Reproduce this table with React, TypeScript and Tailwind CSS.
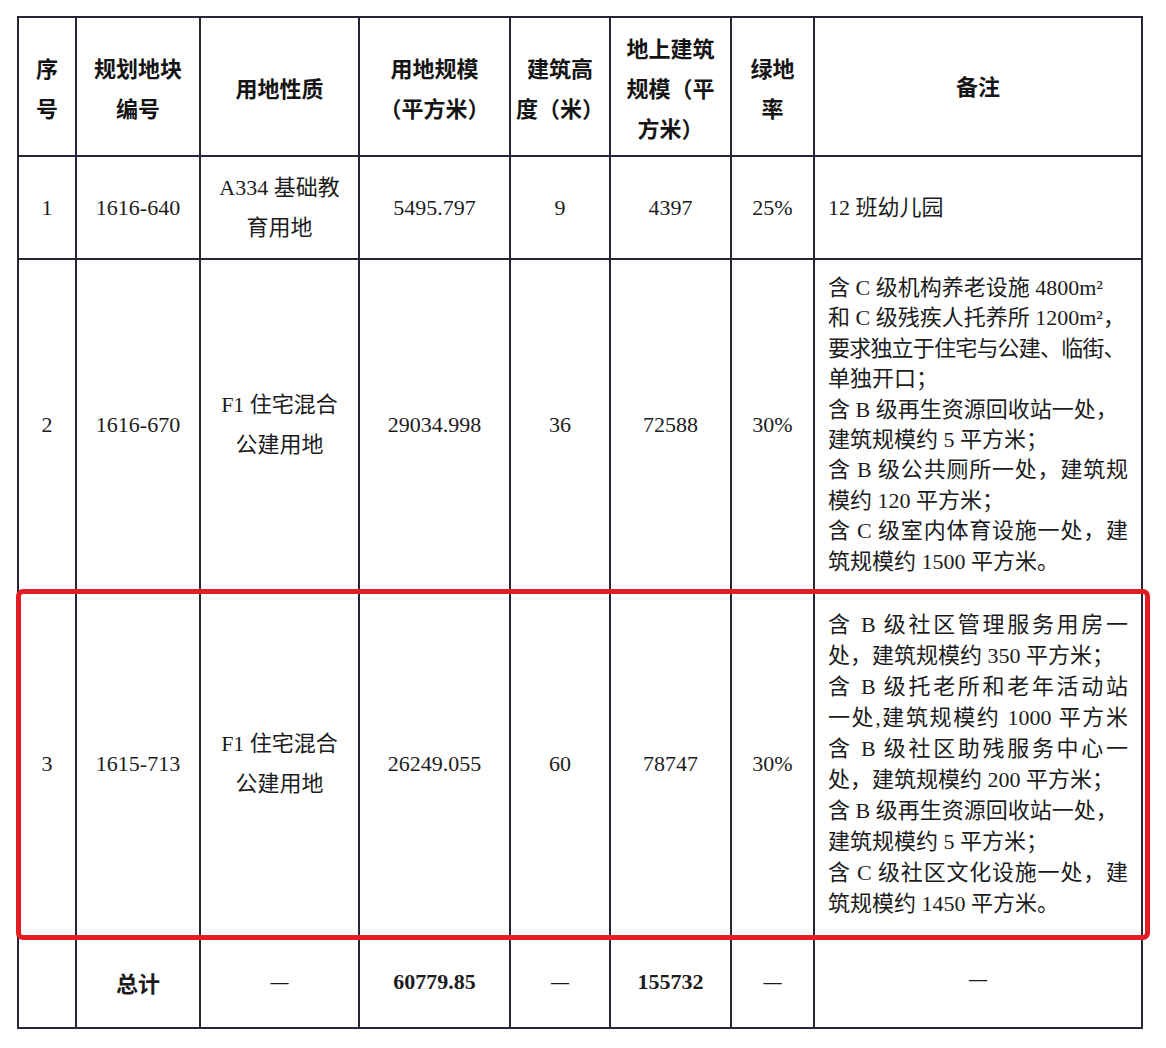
import React from 'react';

// Column widths taken from the scanned table (inner cell widths, 2px rules between)
const cols = 'grid grid-cols-[56px_122px_157px_149px_98px_119px_81px_326px] gap-[2px]';
const serif = "font-['Liberation_Serif','Noto_Sans_CJK_SC',serif]";
const sans = "font-['Noto_Sans_CJK_SC',sans-serif]";

type Line = { text: React.ReactNode; justify?: boolean; tight?: boolean };

function Cell({ children, className = '' }: { children?: React.ReactNode; className?: string }) {
  return (
    <div className={`flex items-center justify-center bg-white text-center ${className}`}>
      <div>{children}</div>
    </div>
  );
}

function Remarks({ lines, leading }: { lines: Line[]; leading: string }) {
  return (
    <div className={`flex flex-col justify-center bg-white px-[13px] ${leading}`}>
      {lines.map((l, i) => (
        <div
          key={i}
          className={`whitespace-nowrap ${l.justify ? 'text-justify [text-align-last:justify]' : 'text-left'} ${
            l.tight ? 'tracking-[-0.8px]' : ''
          }`}
        >
          {l.text}
        </div>
      ))}
    </div>
  );
}

const row2: Line[] = [
  { text: '含 C 级机构养老设施 4800m²' },
  { text: '和 C 级残疾人托养所 1200m²，' },
  { text: '要求独立于住宅与公建、临街、', tight: true },
  { text: '单独开口；' },
  { text: '含 B 级再生资源回收站一处，' },
  { text: '建筑规模约 5 平方米；' },
  { text: '含 B 级公共厕所一处，建筑规', justify: true },
  { text: '模约 120 平方米；' },
  { text: '含 C 级室内体育设施一处，建', justify: true },
  { text: '筑规模约 1500 平方米。' },
];

const row3: Line[] = [
  { text: '含 B 级社区管理服务用房一', justify: true },
  { text: '处，建筑规模约 350 平方米；' },
  { text: '含 B 级托老所和老年活动站', justify: true },
  { text: '一处,建筑规模约 1000 平方米', justify: true },
  { text: '含 B 级社区助残服务中心一', justify: true },
  { text: '处，建筑规模约 200 平方米；' },
  { text: '含 B 级再生资源回收站一处，' },
  { text: '建筑规模约 5 平方米；' },
  { text: '含 C 级社区文化设施一处，建', justify: true },
  { text: '筑规模约 1450 平方米。' },
];

export default function App() {
  return (
    <div className="min-h-[1048px] w-[1166px] bg-white pt-[16px] pl-[17px] text-[#1c1c1c]">
      <div className={`flex w-[1126px] flex-col gap-[2px] bg-[#262636] p-[2px] text-[22px] ${serif}`}>
        {/* Header */}
        <div className={`${cols} h-[137px] ${sans} font-bold leading-[40px] text-[#151515]`}>
          <Cell>序<br />号</Cell>
          <Cell>规划地块<br />编号</Cell>
          <Cell>用地性质</Cell>
          <Cell>用地规模<br />（平方米）</Cell>
          <Cell>建筑高<br />度（米）</Cell>
          <Cell>地上建筑<br />规模（平<br />方米）</Cell>
          <Cell>绿地<br />率</Cell>
          <Cell className="pb-[4px]">备注</Cell>
        </div>

        {/* Row 1 */}
        <div className={`${cols} h-[101px] leading-[40px]`}>
          <Cell>1</Cell>
          <Cell>1616-640</Cell>
          <Cell className="whitespace-nowrap">A334 基础教<br />育用地</Cell>
          <Cell>5495.797</Cell>
          <Cell>9</Cell>
          <Cell>4397</Cell>
          <Cell>25%</Cell>
          <div className="flex items-center bg-white px-[13px]">12 班幼儿园</div>
        </div>

        {/* Row 2 */}
        <div className={`${cols} h-[330px] leading-[40px]`}>
          <Cell>2</Cell>
          <Cell>1616-670</Cell>
          <Cell className="whitespace-nowrap">F1 住宅混合<br />公建用地</Cell>
          <Cell>29034.998</Cell>
          <Cell>36</Cell>
          <Cell>72588</Cell>
          <Cell>30%</Cell>
          <Remarks lines={row2} leading="leading-[30.4px]" />
        </div>

        {/* Row 3, highlighted */}
        <div className={`relative ${cols} h-[343px] leading-[40px]`}>
          <Cell>3</Cell>
          <Cell>1615-713</Cell>
          <Cell className="whitespace-nowrap">F1 住宅混合<br />公建用地</Cell>
          <Cell>26249.055</Cell>
          <Cell>60</Cell>
          <Cell>78747</Cell>
          <Cell>30%</Cell>
          <Remarks lines={row3} leading="leading-[31px]" />
          <div className="pointer-events-none absolute -top-[3px] -right-[9px] -bottom-[5px] -left-[3px] rounded-[7px] border-[5px] border-[#e31b22]" />
        </div>

        {/* Total */}
        <div className={`${cols} h-[90px] leading-[40px]`}>
          <Cell />
          <Cell className={`${sans} font-bold`}>总计</Cell>
          <Cell className="text-[18px] font-bold">—</Cell>
          <Cell className="font-bold">60779.85</Cell>
          <Cell className="text-[18px] font-bold">—</Cell>
          <Cell className="font-bold">155732</Cell>
          <Cell className="text-[18px] font-bold">—</Cell>
          <Cell className="pb-[6px] text-[18px] font-bold">—</Cell>
        </div>
      </div>
    </div>
  );
}
